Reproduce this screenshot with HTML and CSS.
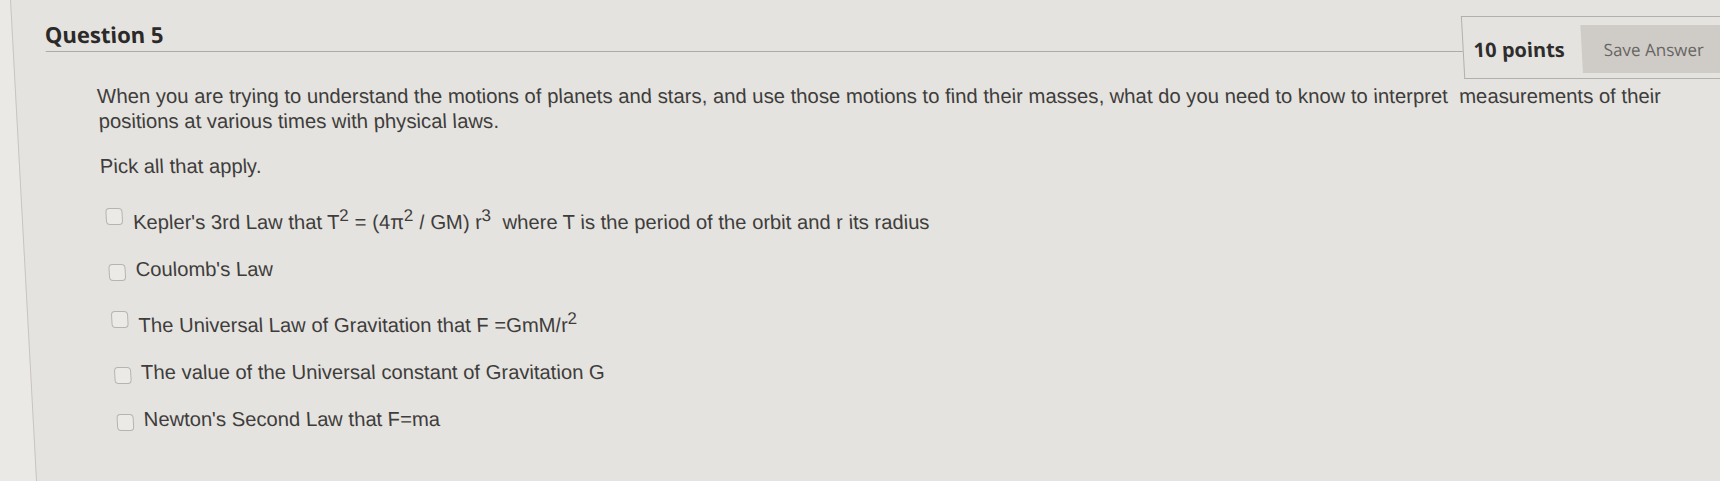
FILE: index.html
```html
<!DOCTYPE html>
<html lang="en">
<head>
<meta charset="utf-8">
<title>Question 5</title>
<link rel="stylesheet" href="styles.css">
</head>
<body>
<div class="sheet">
  <div class="panel">
    <div class="q-header">
      <div class="q-title-wrap">
        <h2 class="q-title">Question 5</h2>
      </div>
      <div class="q-points">
        <span class="points">10 points</span>
        <button class="save-btn" type="button">Save Answer</button>
      </div>
    </div>
    <div class="q-body">
      <p class="q-text">When you are trying to understand the motions of planets and stars, and use those motions to find their masses, what do you need to know to interpret&nbsp; measurements of their positions at various times with physical laws.</p>
      <p class="q-instr">Pick all that apply.</p>
      <ul class="options">
        <li class="option"><span class="cb"></span><span class="label">Kepler's 3rd Law that T<sup>2</sup> = (4π<sup>2</sup> / GM) r<sup>3</sup>&nbsp; where T is the period of the orbit and r its radius</span></li>
        <li class="option"><span class="cb"></span><span class="label">Coulomb's Law</span></li>
        <li class="option"><span class="cb"></span><span class="label">The Universal Law of Gravitation that F =GmM/r<sup>2</sup></span></li>
        <li class="option"><span class="cb"></span><span class="label">The value of the Universal constant of Gravitation G</span></li>
        <li class="option"><span class="cb"></span><span class="label">Newton's Second Law that F=ma</span></li>
      </ul>
    </div>
  </div>
</div>
</body>
</html>
```
FILE: styles.css
```css
html {
  background: #ebe9e6;
}
body {
  margin: 0;
  height: 481px;
  overflow: hidden;
  font-family: "Liberation Sans", Arial, sans-serif;
  color: #3e3d3c;
}
.sheet {
  width: 1780px;
  height: 520px;
  padding-left: 10px;
  background: #ebe9e6;
  transform: skewX(3.1deg);
  transform-origin: 0 0;
}
.panel {
  height: 100%;
  background: #e5e3df;
  border-left: 1px solid #c8c5c1;
  padding: 16px 0 0 32px;
}
.q-header {
  display: flex;
  align-items: flex-start;
}
.q-title-wrap {
  flex: 0 0 1417px;
  box-sizing: border-box;
  height: 36px;
  border-bottom: 1px solid #aeaba7;
  display: flex;
  align-items: flex-end;
  padding-bottom: 6px;
}
.q-title {
  margin: 0;
  font-family: "Open Sans", sans-serif;
  font-weight: 700;
  font-size: 22px;
  line-height: 22px;
  color: #2b2a29;
}
.q-points {
  box-sizing: border-box;
  height: 63px;
  border: 1px solid #b3b0ac;
  border-right: none;
  padding: 8px 0 5px 10px;
  display: flex;
  align-items: center;
  flex: 1;
}
.points {
  font-family: "Open Sans", sans-serif;
  font-weight: 700;
  font-size: 20px;
  color: #2e2d2c;
}
.save-btn {
  margin-left: 17px;
  height: 48px;
  border: none;
  background: #cfccc8;
  padding: 0 60px 0 22px;
  font-family: "Open Sans", sans-serif;
  font-size: 17px;
  color: #676562;
}
.q-body {
  padding-left: 49px;
  width: 1590px;
}
.q-text {
  margin: 5px 0 0;
  font-size: 20.3px;
  line-height: 25px;
}
.q-instr {
  margin: 20px 0 0 -1px;
  font-size: 20.2px;
  line-height: 25px;
}
.options {
  list-style: none;
  margin: 22px 0 0;
  padding: 0 0 0 2px;
}
.option {
  display: flex;
  align-items: flex-start;
  margin-bottom: 22px;
  font-size: 20.2px;
  line-height: 25px;
}
.cb {
  flex: 0 0 auto;
  box-sizing: border-box;
  width: 17px;
  height: 17px;
  margin-top: 7px;
  margin-right: 10px;
  border: 1.5px solid #b7b4b0;
  border-radius: 4px;
  background: #eceae7;
}
.label sup {
  font-size: 17px;
  line-height: 30px;
  vertical-align: 8px;
}
```
